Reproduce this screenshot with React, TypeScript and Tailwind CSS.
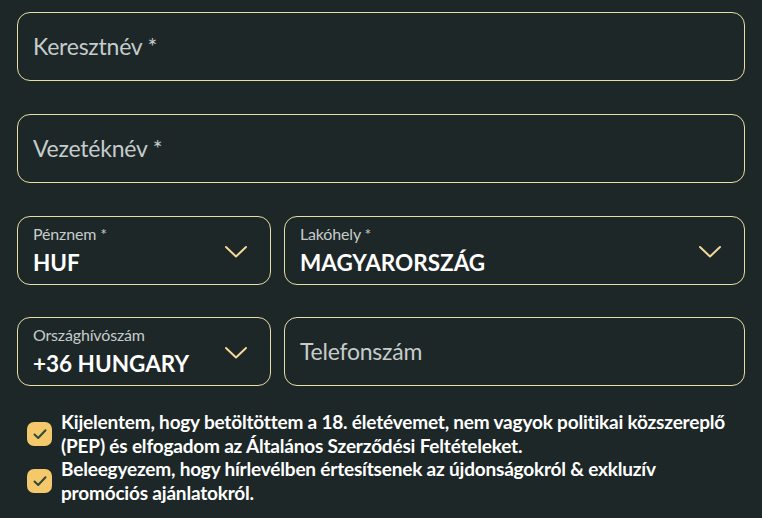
import React from 'react';

const Chevron = () => (
  <svg width="24" height="14" viewBox="0 0 24 14" fill="none" className="shrink-0">
    <path d="M2 2 L12 11.5 L22 2" stroke="#f3d89a" strokeWidth="2" strokeLinecap="round" strokeLinejoin="round" />
  </svg>
);

const CheckBox = () => (
  <div className="w-[25px] h-[24px] rounded-[7px] bg-[#f5c96b] flex items-center justify-center shrink-0">
    <svg width="16" height="16" viewBox="0 0 16 16" fill="none">
      <path d="M2.5 8.5 L6.2 12 L13.5 4.2" stroke="#2b4a3c" strokeWidth="2" strokeLinecap="round" strokeLinejoin="round" />
    </svg>
  </div>
);

const TextField: React.FC<{ placeholder: string; className?: string }> = ({ placeholder, className = '' }) => (
  <div className={`h-[69px] rounded-[13px] border border-[#e6dea6] flex items-center px-[15px] ${className}`}>
    <span className="text-[23px] tracking-[-0.01em] text-[#c5cccb]">{placeholder}</span>
  </div>
);

const SelectField: React.FC<{ label: string; value: string; className?: string }> = ({ label, value, className = '' }) => (
  <div className={`h-[69px] rounded-[13px] border border-[#e6dea6] flex items-center pl-[15px] pr-[22px] ${className}`}>
    <div className="flex-1 flex flex-col gap-[7px]">
      <span className="text-[16px] leading-[17px] tracking-[-0.01em] text-[#c5cccb]">{label}</span>
      <span className="text-[22.5px] leading-[28px] font-bold text-white">{value}</span>
    </div>
    <div className="pt-[3px]">
      <Chevron />
    </div>
  </div>
);

export default function App() {
  return (
    <div className="min-h-[518px] bg-[#1d2727] px-[17px] pt-[12px]" style={{ fontFamily: 'Lato, "Noto Sans", sans-serif' }}>
      <div className="flex flex-col gap-[33px]">
        <TextField placeholder="Keresztnév *" />
        <TextField placeholder="Vezetéknév *" />
        <div className="flex gap-[13px] -mb-[1px]">
          <SelectField label="Pénznem *" value="HUF" className="w-[254px]" />
          <SelectField label="Lakóhely *" value="MAGYARORSZÁG" className="flex-1" />
        </div>
        <div className="flex gap-[13px]">
          <SelectField label="Országhívószám" value="+36 HUNGARY" className="w-[254px]" />
          <TextField placeholder="Telefonszám" className="flex-1" />
        </div>
      </div>
      <div className="mt-[24px] pl-[10px] flex flex-col">
        <div className="flex items-center gap-[9px]">
          <CheckBox />
          <p className="text-[19px] leading-[23.5px] tracking-[-0.01em] font-bold text-white">
            Kijelentem, hogy betöltöttem a 18. életévemet, nem vagyok politikai közszereplő (PEP) és elfogadom az Általános Szerződési Feltételeket.
          </p>
        </div>
        <div className="flex items-center gap-[9px]">
          <CheckBox />
          <p className="text-[19px] leading-[23.5px] tracking-[-0.01em] font-bold text-white">
            Beleegyezem, hogy hírlevélben értesítsenek az újdonságokról &amp; exkluzív promóciós ajánlatokról.
          </p>
        </div>
      </div>
    </div>
  );
}
